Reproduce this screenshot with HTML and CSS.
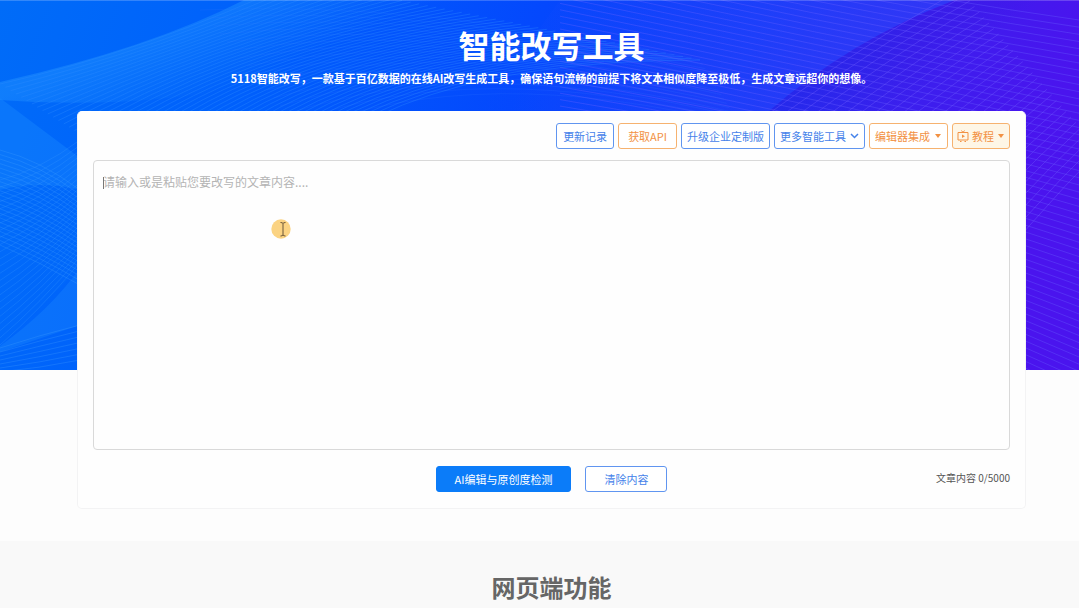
FILE: index.html
```html
<!DOCTYPE html>
<html lang="zh-CN">
<head>
<meta charset="utf-8">
<meta name="viewport" content="width=device-width, initial-scale=1">
<title>智能改写工具</title>
<link rel="stylesheet" href="styles.css">
</head>
<body>
<svg class="backdrop" viewBox="0 0 1079 370" preserveAspectRatio="none" aria-hidden="true">
  <defs>
    <linearGradient id="base" x1="0" x2="1" y1="0" y2="0.12">
      <stop offset="0" stop-color="#006cf8"/>
      <stop offset="0.25" stop-color="#0060fc"/>
      <stop offset="0.5" stop-color="#0448fd"/>
      <stop offset="0.7" stop-color="#1a38f8"/>
      <stop offset="0.85" stop-color="#3a20ee"/>
      <stop offset="1" stop-color="#4a14ee"/>
    </linearGradient>
    <linearGradient id="glow" gradientUnits="userSpaceOnUse" x1="120" y1="48" x2="150" y2="120">
      <stop offset="0" stop-color="#2090ff" stop-opacity="0.5"/>
      <stop offset="1" stop-color="#2090ff" stop-opacity="0"/>
    </linearGradient>
    <linearGradient id="sheet" x1="0" x2="1" y1="0" y2="0">
      <stop offset="0" stop-color="#2450ff" stop-opacity="0"/>
      <stop offset="1" stop-color="#2450ff" stop-opacity="0.5"/>
    </linearGradient>
    <linearGradient id="shade" gradientUnits="userSpaceOnUse" x1="850" y1="45" x2="900" y2="110">
      <stop offset="0" stop-color="#2a10cc" stop-opacity="0.25"/>
      <stop offset="1" stop-color="#2a10cc" stop-opacity="0"/>
    </linearGradient>
  </defs>
  <rect width="1079" height="370" fill="url(#base)"/>
  <path d="M0 82Q150 48 244 0H500Q260 120 0 100Z" fill="url(#glow)"/>
  <path d="M0 98L80 158V190Q40 180 0 190Z" fill="#1a8aff" fill-opacity="0.4"/>
  <path d="M0 190Q40 180 80 190V268L0 346Z" fill="#0a7cff" fill-opacity="0.15"/>
  <path d="M0 346Q50 310 80 268V325L0 352Z" fill="#2090ff" fill-opacity="0.3"/>
  <path d="M560 0H955Q850 40 768 112H480Z" fill="url(#sheet)"/>
  <path d="M955 0Q850 40 768 112H1079V0Z" fill="url(#shade)"/>
  <g id="waves"></g>
  <rect width="1079" height="1" fill="#ffffff" fill-opacity="0.2"/>
</svg>
<main class="page">
  <header class="intro">
    <h1 class="title">智能改写工具</h1>
    <p class="summary">5118智能改写，一款基于百亿数据的在线AI改写生成工具，确保语句流畅的前提下将文本相似度降至极低，生成文章远超你的想像。</p>
  </header>
  <section class="card">
    <nav class="toolbar" aria-label="工具">
      <button class="btn" type="button">更新记录</button>
      <button class="btn orange roomy" type="button">获取API</button>
      <button class="btn compact" type="button">升级企业定制版</button>
      <button class="btn compact" type="button">更多智能工具
        <svg width="9" height="6" viewBox="0 0 9 6" aria-hidden="true"><path d="M1 1L4.500 4.500L8 1" fill="none" stroke="currentColor" stroke-width="1.500"/></svg>
      </button>
      <button class="btn orange compact" type="button">编辑器集成
        <svg width="8" height="4" viewBox="0 0 8 4" aria-hidden="true"><path d="M1 0H7L4 4Z" fill="currentColor"/></svg>
      </button>
      <button class="btn orange tinted" type="button">
        <svg width="12" height="12" viewBox="0 0 12 12" aria-hidden="true"><path d="M1 2.500H11V10H1ZM4.500 .5L6 2.500L7.500 .5M3 11.500H4.500M7.500 11.500H9" fill="none" stroke="currentColor"/><path d="M5 4.500V8L8 6.200Z" fill="currentColor"/></svg>
        教程
        <svg width="8" height="4" viewBox="0 0 8 4" aria-hidden="true"><path d="M1 0H7L4 4Z" fill="currentColor"/></svg>
      </button>
    </nav>
    <div class="editor">
      <textarea class="article" aria-label="文章内容" placeholder="请输入或是粘贴您要改写的文章内容...."></textarea>
      <span class="caret"></span>
      <svg class="pointer" viewBox="0 0 20 20" aria-hidden="true"><circle cx="10" cy="10" r="9.700" fill="#fbd382"/><path d="M9.500 3.500Q11.500 3.500 12 4.500Q12.500 3.500 14.500 3.500M12 4.500V16M9.500 17Q11.500 17 12 16Q12.500 17 14.500 17" fill="none" stroke="#6b5638"/></svg>
    </div>
    <div class="actions">
      <button class="btn primary" type="button">AI编辑与原创度检测</button>
      <button class="btn clear" type="button">清除内容</button>
      <span class="counter">文章内容 0/5000</span>
    </div>
  </section>
</main>
<section class="features">
  <h2 class="features-title">网页端功能</h2>
</section>
<script src="waves.js"></script>
</body>
</html>
```

FILE: styles.css
```css
* { box-sizing: border-box; }
body {
  margin: 0;
  background: #fdfdfd;
  color: #555;
  font: 11px/16px "Noto Sans CJK SC", sans-serif;
}
button, textarea { font: inherit; }

.backdrop {
  position: absolute;
  inset: 0 0 auto;
  z-index: -1;
  width: 100%;
  height: 370px;
}
.page { padding: 23px 53px 32px 77px; }
.intro {
  color: #fff;
  text-align: center;
}
.title {
  margin: 0;
  font-size: 31px;
  line-height: 44px;
  font-weight: 700;
}
.summary {
  margin: 3px 0 25px;
  font-weight: 700;
}

.card {
  padding: 11px 15px 16px;
  border: 1px solid #f3f3f4;
  border-top-color: #fff;
  border-radius: 5px;
  background: #fefefe;
}
.toolbar {
  display: flex;
  justify-content: flex-end;
  gap: 4px;
  margin-bottom: 11px;
}
.btn {
  display: flex;
  align-items: center;
  justify-content: center;
  gap: 4px;
  height: 26px;
  padding: 0 6px;
  border: 1px solid #6095f0;
  border-radius: 3px;
  background: #fff;
  color: #4582ea;
  white-space: nowrap;
}
.compact { padding: 0 5px; }
.roomy { padding: 0 9px; }
.orange {
  border-color: #f6b26f;
  color: #f29143;
}
.tinted {
  gap: 3px;
  padding: 0 4px;
  background: #fef6e6;
}

.editor { position: relative; }
.article {
  display: block;
  width: 100%;
  height: 290px;
  padding: 12px 9px;
  border: 1px solid #d9d9d9;
  border-radius: 4px;
  outline: 0;
  background: #fefefe;
  font-size: 12px;
  line-height: 18px;
  resize: none;
}
.article::placeholder { color: #b4b4b4; }
.caret {
  position: absolute;
  top: 17px;
  left: 10px;
  width: 1px;
  height: 12px;
  background: #777;
}
.pointer {
  position: absolute;
  top: 59px;
  left: 178px;
  width: 20px;
  height: 20px;
}

.actions {
  display: grid;
  grid-template-columns: 1fr auto auto 1fr;
  column-gap: 14px;
  margin-top: 16px;
}
.primary {
  grid-column: 2;
  padding: 0 18px;
  border-color: #0b7cf9;
  background: #0b7cf9;
  color: #fff;
}
.clear { padding: 0 18px; }
.counter {
  justify-self: end;
  padding-top: 4px;
  font-size: 10px;
}

.features {
  padding: 28px 53px 24px 77px;
  background: #f9f9f9;
  text-align: center;
}
.features-title {
  margin: 0;
  color: #666;
  font-size: 24px;
  line-height: 36px;
}
```

FILE: waves.js
```js
// Each family blends one quadratic curve into another: [x0, y0, cx, cy, x1, y1].
const families = [
  { from: [0, 84, 150, 50, 300, -20], to: [250, 240, 330, 60, 700, 60], count: 48, color: "#2d8dff", opacity: 0.35 },
  { from: [200, 10, 420, 0, 700, 60], to: [300, 130, 480, 60, 740, 125], count: 16, color: "#3d80ff", opacity: 0.15 },
  { from: [0, 150, 40, 160, 80, 190], to: [0, 245, 40, 262, 80, 285], count: 22, color: "#4aa8ff", opacity: 0.25 },
  { from: [0, 180, 40, 170, 80, 140], to: [0, 345, 40, 310, 80, 262], count: 24, color: "#3a9cff", opacity: 0.25 },
  { from: [0, 348, 40, 335, 80, 325], to: [0, 372, 40, 368, 80, 360], count: 7, color: "#4aa8ff", opacity: 0.25 },
  { from: [560, -80, 800, -20, 1079, 20], to: [560, 260, 860, 290, 1079, 400], count: 54, color: "#6a62ff", opacity: 0.35 },
  { from: [760, 120, 870, 40, 960, -10], to: [960, 310, 1030, 220, 1100, 150], count: 30, color: "#7560ff", opacity: 0.35 }
];

const waves = document.getElementById("waves");
for (const { from, to, count, color, opacity } of families) {
  for (let i = 0; i < count; i++) {
    const p = from.map((v, k) => v + (to[k] - v) * i / (count - 1));
    const path = document.createElementNS("http://www.w3.org/2000/svg", "path");
    path.setAttribute("d", `M${p[0]} ${p[1]}Q${p[2]} ${p[3]} ${p[4]} ${p[5]}`);
    path.setAttribute("fill", "none");
    path.setAttribute("stroke", color);
    path.setAttribute("stroke-opacity", opacity);
    waves.append(path);
  }
}
```
